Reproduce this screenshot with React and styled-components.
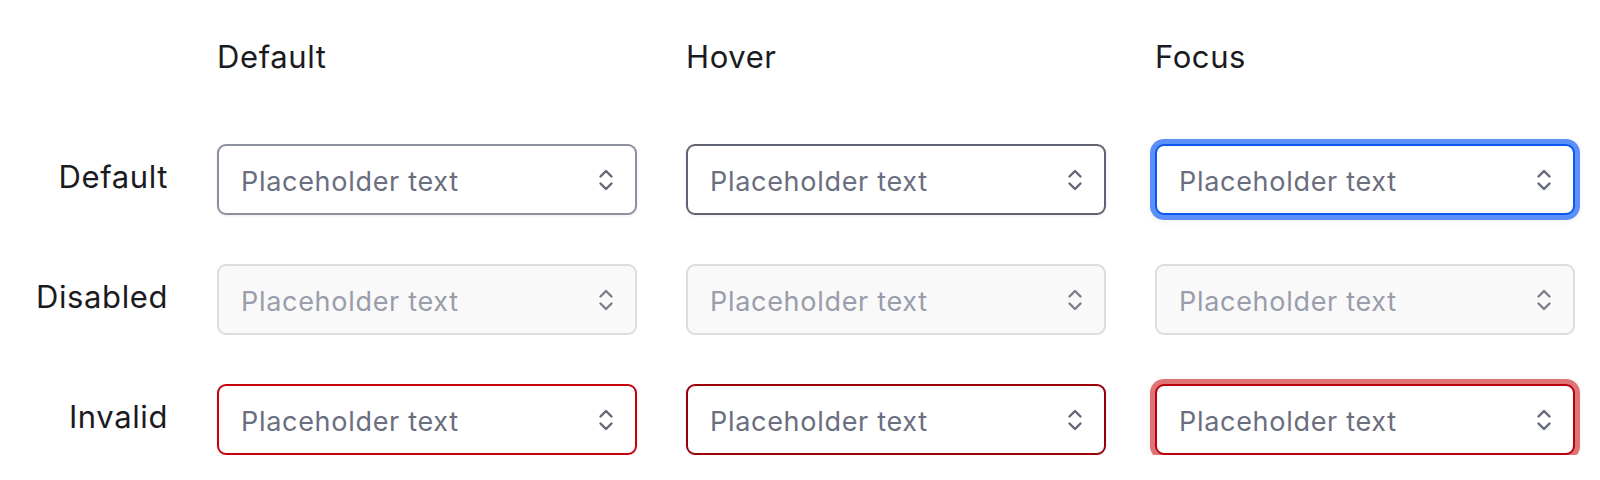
import React from "react";
import styled, { createGlobalStyle, css } from "styled-components";

const GlobalStyle = createGlobalStyle`
  body {
    margin: 0;
    background: #ffffff;
    font-family: Inter, "Noto Sans", sans-serif;
  }
`;

const Page = styled.div`
  padding-top: 39px;
  display: flex;
  flex-direction: column;
  gap: 49px;
`;

const Grid = styled.div`
  display: grid;
  grid-template-columns: 168px repeat(3, 420px);
  column-gap: 49px;
  align-items: center;
`;

const HeaderRow = styled(Grid)`
  margin-bottom: 20px;
`;

const ColumnTitle = styled.div`
  font-size: 31px;
  line-height: 36px;
  letter-spacing: 0.6px;
  color: #1b1b1f;
`;

const RowLabel = styled.div`
  font-size: 31px;
  line-height: 36px;
  letter-spacing: 0.6px;
  color: #1b1b1f;
  text-align: right;
  margin-bottom: 6px;
`;

const variants = {
  default: css`
    border-color: #8d909e;
  `,
  hover: css`
    border-color: #606373;
  `,
  focus: css`
    border-color: #0c57ee;
    box-shadow: 0 0 0 5px #5b8ff9, 0 2px 6px 5px rgba(0, 0, 0, 0.06);
  `,
  disabled: css`
    border-color: #dcdce1;
    background: #f9f9fa;
    color: #9a9daa;
    box-shadow: none;
  `,
  invalid: css`
    border-color: #c8000e;
  `,
  invalidHover: css`
    border-color: #9b000a;
  `,
  invalidFocus: css`
    border-color: #b9000c;
    box-shadow: 0 0 0 5px #df7477, 0 2px 6px 5px rgba(0, 0, 0, 0.06);
  `,
};

const Select = styled.div`
  box-sizing: border-box;
  height: 71px;
  display: flex;
  align-items: center;
  justify-content: space-between;
  padding: 3px 21px 0 22px;
  border: 2px solid;
  border-radius: 9px;
  background: #ffffff;
  color: #6a6e7e;
  box-shadow: 0 1px 3px rgba(0, 0, 0, 0.08);
  font-size: 27px;
  letter-spacing: 0.7px;
  ${(p) => variants[p.$variant]}
`;

const Chevron = styled.svg`
  width: 16px;
  height: 26px;
  margin-top: -3px;
  color: ${(p) => (p.$muted ? "#7b7e8b" : "#62667a")};
`;

const Arrows = ({ muted }) => (
  <Chevron $muted={muted} viewBox="0 0 16 26" fill="none">
    <path
      d="M2.5 9.5 L8 4 L13.5 9.5 M2.5 16.5 L8 22 L13.5 16.5"
      stroke="currentColor"
      strokeWidth="2.4"
      strokeLinecap="round"
      strokeLinejoin="round"
    />
  </Chevron>
);

const rows = [
  { label: "Default", states: ["default", "hover", "focus"] },
  { label: "Disabled", states: ["disabled", "disabled", "disabled"] },
  { label: "Invalid", states: ["invalid", "invalidHover", "invalidFocus"] },
];

export default function App() {
  return (
    <>
      <GlobalStyle />
      <Page>
        <HeaderRow>
          <span />
          <ColumnTitle>Default</ColumnTitle>
          <ColumnTitle>Hover</ColumnTitle>
          <ColumnTitle>Focus</ColumnTitle>
        </HeaderRow>
        {rows.map((row) => (
          <Grid key={row.label}>
            <RowLabel>{row.label}</RowLabel>
            {row.states.map((s, i) => (
              <Select key={i} $variant={s}>
                <span>Placeholder text</span>
                <Arrows muted={s === "disabled"} />
              </Select>
            ))}
          </Grid>
        ))}
      </Page>
    </>
  );
}
